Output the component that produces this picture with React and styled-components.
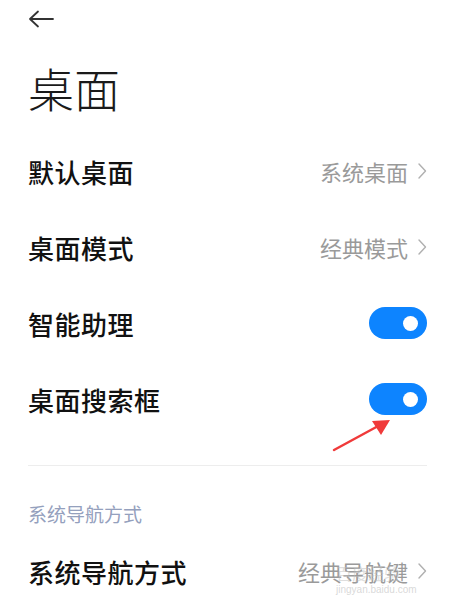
import React from 'react'
import styled, { createGlobalStyle } from 'styled-components';

const GlobalStyle = createGlobalStyle`
    body {
        margin: 0;
        background: #ffffff;
        font-family: "Noto Sans CJK SC", "Noto Sans", sans-serif;
    }
`;

const Page = styled.div`
    position: relative;
    width: 453px;
    height: 609px;
    overflow: hidden;
    background: #ffffff;
    padding: 0 26px 0 28px;
    box-sizing: border-box;
`;

const TopBar = styled.div`
    height: 38px;
    display: flex;
    align-items: center;
`;

const Title = styled.h1`
    margin: 22px 0 19px;
    height: 54px;
    line-height: 54px;
    font-size: 46px;
    font-weight: 300;
    color: #1a1a1a;
`;

const Row = styled.div`
    height: 76px;
    display: flex;
    align-items: center;
    justify-content: space-between;
`;

const Label = styled.span`
    font-size: 26px;
    font-weight: 500;
    color: #111111;
    letter-spacing: 0.5px;
`;

const Value = styled.span`
    display: flex;
    align-items: center;
    gap: 9px;
    font-size: 22px;
    color: #9a9a9a;
`;

const Toggle = styled.div`
    position: relative;
    width: 58px;
    height: 32px;
    border-radius: 16px;
    background: ${props => props.on ? '#0d84ff' : '#dcdcdc'};
    &::after {
        content: '';
        position: absolute;
        top: 8.5px;
        right: 9.5px;
        width: 15px;
        height: 15px;
        border-radius: 50%;
        background: #ffffff;
    }
`;

const Divider = styled.div`
    margin-top: 28px;
    height: 1px;
    background: #ededed;
`;

const SectionHeader = styled.div`
    margin: 34px 0 5px;
    height: 28px;
    line-height: 28px;
    font-size: 19px;
    color: #94a0bd;
`;

const Annotation = styled.svg`
    position: absolute;
    left: 0;
    top: 0;
    pointer-events: none;
`;

const Watermark = styled.div`
    position: absolute;
    left: 336px;
    top: 562px;
    font-family: "Liberation Sans", sans-serif;
    font-size: 10px;
    line-height: 12px;
    color: rgba(200, 200, 200, 0.7);
    span {
        display: block;
        font-family: "Noto Sans CJK SC", sans-serif;
        font-size: 16px;
        line-height: 22px;
        color: rgba(190, 190, 190, 0.5);
    }
`;

const BackArrow = () => (
    <svg width="26" height="18" viewBox="0 0 26 18">
        <path d="M25 9H2M10 1.5L2 9l8 7.5" fill="none" stroke="#333" strokeWidth="1.8" strokeLinecap="round" strokeLinejoin="round"/>
    </svg>
);

const Chevron = () => (
    <svg width="10" height="18" viewBox="0 0 10 18">
        <path d="M2 2l6.5 7L2 16" fill="none" stroke="#b0b0b0" strokeWidth="1.4" strokeLinecap="round" strokeLinejoin="round"/>
    </svg>
);

const rows = [
    { label: '默认桌面', value: '系统桌面' },
    { label: '桌面模式', value: '经典模式' },
    { label: '智能助理', toggle: true },
    { label: '桌面搜索框', toggle: true },
];

export default function App() {
    return (
        <>
            <GlobalStyle/>
            <Page>
                <TopBar>
                    <BackArrow/>
                </TopBar>
                <Title>桌面</Title>
                {rows.map(r => (
                    <Row key={r.label}>
                        <Label>{r.label}</Label>
                        {r.toggle
                            ? <Toggle on={1}/>
                            : <Value>{r.value}<Chevron/></Value>}
                    </Row>
                ))}
                <Divider/>
                <SectionHeader>系统导航方式</SectionHeader>
                <Row>
                    <Label>系统导航方式</Label>
                    <Value>经典导航键<Chevron/></Value>
                </Row>
                <Annotation width="453" height="609">
                    <line x1="334" y1="450" x2="380" y2="425" stroke="#f03a3a" strokeWidth="2.5" strokeLinecap="round"/>
                    <polygon points="390,420 372,421 381,435" fill="#f03a3a"/>
                </Annotation>
                <Watermark>
                    <span>百度经验</span>
                    jingyan.baidu.com
                </Watermark>
            </Page>
        </>
    )
}
